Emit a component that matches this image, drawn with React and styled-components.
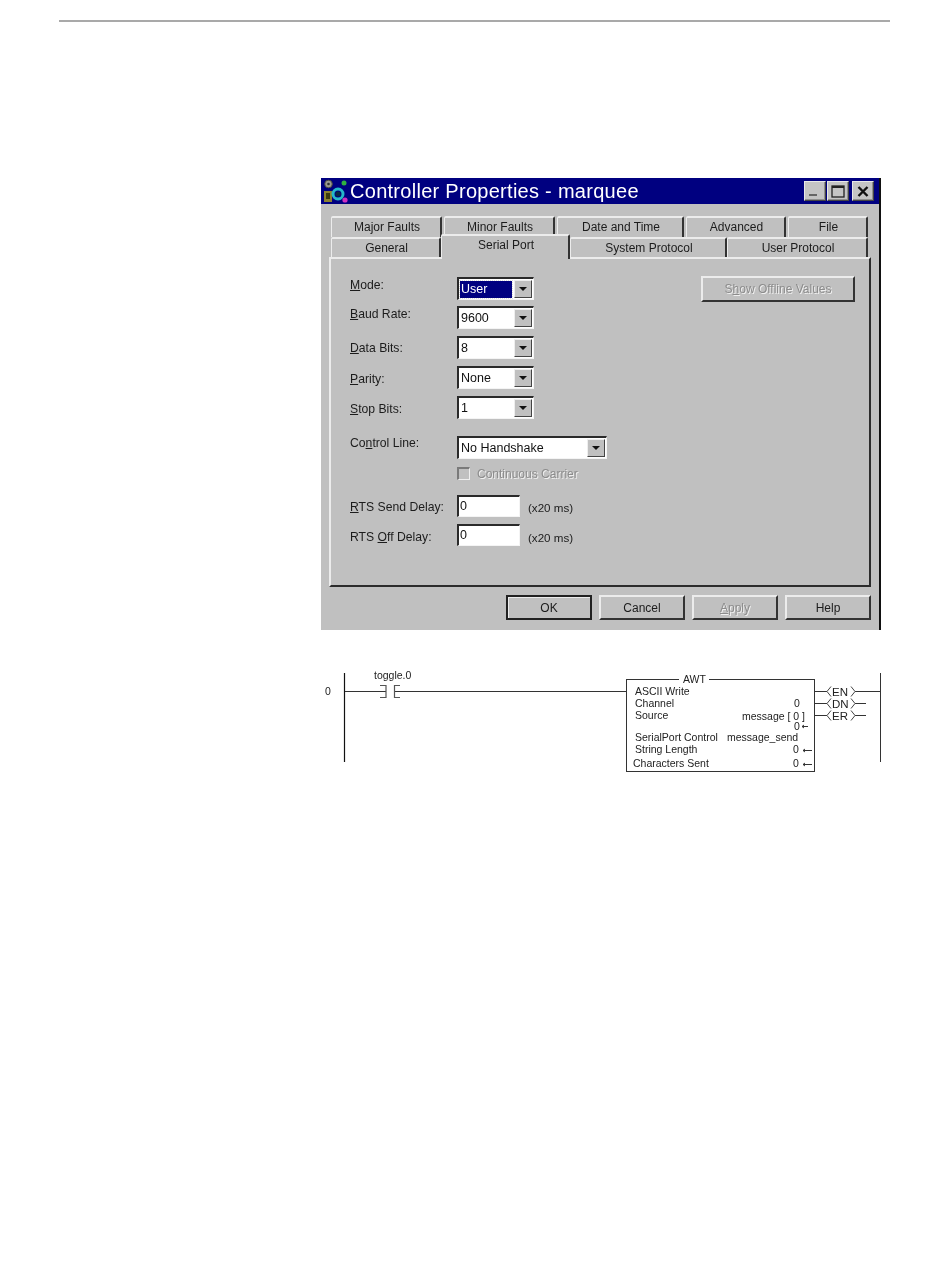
import React from 'react';
import styled, { createGlobalStyle } from 'styled-components';

const GlobalStyle = createGlobalStyle`
  html, body {
    margin: 0;
    padding: 0;
    background: #fff;
  }
  body {
    font-family: "Liberation Sans", Arial, sans-serif;
    color: #111;
  }
`;

const Page = styled.div`
  width: 950px;
  height: 1267px;
  padding-top: 20px;
  box-sizing: border-box;
  overflow: hidden;
`;

const TopRule = styled.hr`
  width: 831px;
  height: 2px;
  margin: 0 0 0 59px;
  border: 0;
  background: #a9a9a9;
`;

const Dialog = styled.section`
  width: 560px;
  height: 452px;
  margin: 156px 0 0 321px;
  box-sizing: border-box;
  display: flex;
  flex-direction: column;
  background: #c0c0c0;
  border-right: 2px solid #111;
  filter: blur(0.4px);
`;

const TitleBar = styled.header`
  height: 26px;
  flex: none;
  display: flex;
  align-items: center;
  background: #000080;
  padding: 0 5px 0 2px;
`;

const TitleText = styled.h1`
  margin: 0 0 0 2px;
  flex: 1;
  color: #fff;
  font-size: 20px;
  font-weight: 400;
  letter-spacing: 0.28px;
  white-space: nowrap;
`;

const WinButton = styled.button`
  width: 22px;
  height: 20px;
  margin-left: ${({ $gap }) => $gap || 1}px;
  padding: 0;
  display: flex;
  align-items: center;
  justify-content: center;
  background: #c4c4c4;
  border: 1px solid;
  border-color: #e8e8e8 #444 #444 #e8e8e8;
  box-shadow: inset -1px -1px 0 #909090;
`;

const Tabs = styled.div`
  flex: none;
  padding: 12px 0 0 10px;
  height: 41px;
`;

const TabRow = styled.div`
  display: flex;
  height: 21px;
`;

const Tab = styled.div`
  width: ${({ $w }) => $w}px;
  height: ${({ $active }) => ($active ? 25 : 21)}px;
  margin-top: ${({ $active }) => ($active ? -3 : 0)}px;
  margin-right: ${({ $gap }) => $gap || 0}px;
  padding: 2px 0 0 2px;
  box-sizing: border-box;
  position: relative;
  z-index: ${({ $active }) => ($active ? 2 : 0)};
  text-align: center;
  font-size: 12px;
  line-height: 15px;
  color: #1c1c1c;
  background: #c0c0c0;
  border-top: 2px solid #ececec;
  border-left: 1px solid #ececec;
  border-right: 2px solid #333;
  border-radius: 2px 2px 0 0;
`;

const Panel = styled.div`
  width: 542px;
  height: 330px;
  margin: 0 0 0 8px;
  box-sizing: border-box;
  flex: none;
  position: relative;
  padding: 18px 0 0 19px;
  background: #c0c0c0;
  border-style: solid;
  border-width: 2px;
  border-color: #ececec #2c2c2c #2c2c2c #ececec;
`;

const Row = styled.div`
  display: flex;
  align-items: center;
  height: ${({ $h }) => $h || 23}px;
  margin-top: ${({ $mt }) => $mt || 0}px;
`;

const Label = styled.label`
  width: 107px;
  flex: none;
  font-size: 12.2px;
  color: #1c1c1c;
  margin-top: ${({ $dy }) => $dy || 0}px;
`;

const Under = styled.span`
  text-decoration: underline;
`;

const Select = styled.div`
  width: ${({ $w }) => $w || 77}px;
  height: 23px;
  box-sizing: border-box;
  display: flex;
  align-items: center;
  justify-content: space-between;
  padding: 0 1px;
  background: #fff;
  border-style: solid;
  border-width: 2px 1px 1px 2px;
  border-color: #2a2a2a #f4f4f4 #f4f4f4 #2a2a2a;
`;

const SelectValue = styled.span`
  font-size: 12.5px;
  padding: 0 ${({ $focus }) => ($focus ? 6 : 1)}px 0 1px;
  margin-right: auto;
  flex: ${({ $focus }) => ($focus ? 1 : 'none')};
  line-height: 17px;
  color: ${({ $focus }) => ($focus ? '#fff' : '#111')};
  background: ${({ $focus }) => ($focus ? '#000080' : 'transparent')};
  outline: ${({ $focus }) => ($focus ? '1px dotted #ddd' : 'none')};
`;

const Arrow = styled.span`
  width: 18px;
  height: 18px;
  flex: none;
  display: flex;
  align-items: center;
  justify-content: center;
  margin-left: ${({ $focus }) => ($focus ? 2 : 0)}px;
  background: #c0c0c0;
  box-sizing: border-box;
  border-style: solid;
  border-width: 1px;
  border-color: #eee #444 #444 #eee;
  &::after {
    content: '';
    border-style: solid;
    border-width: 4px 4px 0 4px;
    border-color: #111 transparent transparent transparent;
  }
`;

const CheckRow = styled.div`
  display: flex;
  align-items: center;
  height: 15px;
  margin: 7px 0 0 107px;
`;

const CheckBox = styled.span`
  width: 13px;
  height: 13px;
  box-sizing: border-box;
  background: #c0c0c0;
  border-style: solid;
  border-width: 2px 1px 1px 2px;
  border-color: #7a7a7a #eee #eee #7a7a7a;
`;

const DisabledText = styled.span`
  margin-left: ${({ $ml }) => $ml || 0}px;
  font-size: 12px;
  color: #8c8c8c;
  text-shadow: 1px 1px 0 #f0f0f0;
`;

const TextBox = styled.div`
  width: 63px;
  height: 22px;
  box-sizing: border-box;
  padding: 1px 0 0 1px;
  font-size: 12.5px;
  line-height: 16px;
  background: #fff;
  border-style: solid;
  border-width: 2px 1px 1px 2px;
  border-color: #2a2a2a #f4f4f4 #f4f4f4 #2a2a2a;
`;

const Unit = styled.span`
  margin: ${({ $dy }) => $dy || 0}px 0 0 8px;
  font-size: 11.6px;
  color: #1c1c1c;
`;

const OfflineButton = styled.div`
  position: absolute;
  top: 17px;
  right: 14px;
  width: 154px;
  height: 26px;
  box-sizing: border-box;
  display: flex;
  align-items: center;
  justify-content: center;
  background: #c0c0c0;
  border-style: solid;
  border-width: 2px;
  border-color: #ececec #333 #333 #ececec;
`;

const Footer = styled.footer`
  flex: 1;
  display: flex;
  justify-content: flex-end;
  gap: 7px;
  padding: 8px 8px 0 0;
`;

const DialogButton = styled.div`
  width: 86px;
  height: 25px;
  box-sizing: border-box;
  display: flex;
  align-items: center;
  justify-content: center;
  font-size: 12px;
  color: #1c1c1c;
  background: #c0c0c0;
  border-style: solid;
  border-width: 2px;
  border-color: ${({ $primary }) =>
    $primary ? '#222' : '#ececec #333 #333 #ececec'};
  box-shadow: ${({ $primary }) =>
    $primary ? 'inset 1px 1px 0 #ececec' : 'none'};
`;

const Ladder = styled.svg`
  display: block;
  margin: 32px 0 0 320px;
  font-family: "Liberation Sans", Arial, sans-serif;
  font-size: 10.5px;
  fill: #222;
  filter: blur(0.3px);
`;

const AppIcon = () => (
  <svg width="25" height="24" viewBox="0 0 25 24" style={{ flex: 'none' }}>
    <circle cx="5.5" cy="5" r="3.8" fill="#9a9a90" stroke="#4a4a40" />
    <circle cx="5.5" cy="5" r="1.3" fill="#333" />
    <rect x="1" y="12" width="8" height="11" fill="#8a8030" />
    <rect x="3" y="14" width="4" height="6" fill="#3a3810" />
    <circle cx="15" cy="15" r="5" fill="none" stroke="#25b8c8" strokeWidth="3" />
    <circle cx="15" cy="15" r="2.5" fill="#0a2a40" />
    <circle cx="21" cy="4" r="2.5" fill="#30b040" />
    <circle cx="22" cy="21" r="2.6" fill="#d030c0" />
  </svg>
);

const Coil = ({ y, name }) => (
  <>
    <path
      d={`M814 ${y}H827M855 ${y}H${name === 'EN' ? 880 : 866}`}
      stroke="#333"
      fill="none"
    />
    <path
      d={`M831 ${y - 5}L827 ${y}L831 ${y + 5}M851 ${y - 5}L855 ${y}L851 ${y + 5}`}
      stroke="#444"
      fill="none"
    />
    <text x="832" y={y + 4} fontSize="11.5">{name}</text>
  </>
);

const rows = [
  { label: 'ode:', key: 'M', value: 'User', focus: true, mt: 0, dy: -7 },
  { label: 'aud Rate:', key: 'B', value: '9600', mt: 6, dy: -7 },
  { label: 'ata Bits:', key: 'D', value: '8', mt: 7, dy: 0 },
  { label: 'arity:', key: 'P', value: 'None', mt: 7, dy: 2 },
  { label: 'top Bits:', key: 'S', value: '1', mt: 7, dy: 2 },
];

const backTabs = [
  ['Major Faults', 111, 2],
  ['Minor Faults', 111, 2],
  ['Date and Time', 127, 2],
  ['Advanced', 100, 2],
  ['File', 80, 0],
];

const frontTabs = [
  ['General', 110],
  ['Serial Port', 129, true],
  ['System Protocol', 157],
  ['User Protocol', 141],
];

const App = () => {
  return (
    <>
      <GlobalStyle />
      <Page>
        <TopRule />
        <Dialog>
          <TitleBar>
            <AppIcon />
            <TitleText>Controller Properties - marquee</TitleText>
            <WinButton>
              <svg width="14" height="12"><rect x="1" y="9" width="8" height="2" fill="#666" /></svg>
            </WinButton>
            <WinButton>
              <svg width="14" height="13"><rect x="1" y="1" width="12" height="11" fill="none" stroke="#222" strokeWidth="1.3" /><rect x="1" y="1" width="12" height="2" fill="#222" /></svg>
            </WinButton>
            <WinButton $gap={3}>
              <svg width="12" height="11"><path d="M1.5 1 L10.5 10 M10.5 1 L1.5 10" stroke="#111" strokeWidth="2.4" /></svg>
            </WinButton>
          </TitleBar>
          <Tabs>
            <TabRow>
              {backTabs.map(([name, w, gap]) => (
                <Tab key={name} $w={w} $gap={gap}>{name}</Tab>
              ))}
            </TabRow>
            <TabRow>
              {frontTabs.map(([name, w, active]) => (
                <Tab key={name} $w={w} $active={active}>{name}</Tab>
              ))}
            </TabRow>
          </Tabs>
          <Panel>
            <OfflineButton>
              <DisabledText>S<Under>h</Under>ow Offline Values</DisabledText>
            </OfflineButton>
            {rows.map((r) => (
              <Row key={r.key} $mt={r.mt}>
                <Label $dy={r.dy}><Under>{r.key}</Under>{r.label}</Label>
                <Select>
                  <SelectValue $focus={r.focus}>{r.value}</SelectValue>
                  <Arrow $focus={r.focus} />
                </Select>
              </Row>
            ))}
            <Row $mt={17}>
              <Label $dy={-10}>Co<Under>n</Under>trol Line:</Label>
              <Select $w={150}>
                <SelectValue>No Handshake</SelectValue>
                <Arrow />
              </Select>
            </Row>
            <CheckRow>
              <CheckBox />
              <DisabledText $ml={7}>Continuous Carrier</DisabledText>
            </CheckRow>
            <Row $h={22} $mt={14}>
              <Label $dy={2}><Under>R</Under>TS Send Delay:</Label>
              <TextBox>0</TextBox>
              <Unit $dy={2}>(x20 ms)</Unit>
            </Row>
            <Row $h={22} $mt={7}>
              <Label $dy={4}>RTS <Under>O</Under>ff Delay:</Label>
              <TextBox>0</TextBox>
              <Unit $dy={4}>(x20 ms)</Unit>
            </Row>
          </Panel>
          <Footer>
            <DialogButton $primary>OK</DialogButton>
            <DialogButton>Cancel</DialogButton>
            <DialogButton><DisabledText><Under>A</Under>pply</DisabledText></DialogButton>
            <DialogButton>Help</DialogButton>
          </Footer>
        </Dialog>

        {/* ladder rung, viewBox keeps the page coordinates */}
        <Ladder width="570" height="115" viewBox="320 662 570 115">
          <g stroke="#333" fill="none">
            <path d="M344.5 673V762" stroke="#111" strokeWidth="1.2" />
            <path d="M880.5 673V762" />
            <path d="M345 691.5H386M394 691.5H626" />
            <path d="M380 685.5H386V697.5H380M400 685.5H394.5V697.5H400" stroke="#555" strokeWidth="1.2" />
            <rect x="626.5" y="679.5" width="188" height="92" />
          </g>
          <rect x="679" y="676" width="30" height="7" fill="#fff" />
          <Coil y={691.5} name="EN" />
          <Coil y={703.5} name="DN" />
          <Coil y={715.5} name="ER" />
          <text x="325" y="695">0</text>
          <text x="374" y="679">toggle.0</text>
          <text x="683" y="683">AWT</text>
          <text x="635" y="695">ASCII Write</text>
          <text x="635" y="707">Channel</text>
          <text x="635" y="719">Source</text>
          <text x="794" y="707">0</text>
          <text x="742" y="720">message [ 0 ]</text>
          <text x="794" y="730">0</text>
          <text x="635" y="741">SerialPort Control</text>
          <text x="727" y="741">message_send</text>
          <text x="635" y="753">String Length</text>
          <text x="793" y="753">0</text>
          <text x="633" y="767">Characters Sent</text>
          <text x="793" y="767">0</text>
          <g stroke="#333" fill="none">
            <path d="M802 726.5H808M802 726.5L804 725M802 726.5L804 728" />
            <path d="M803 750.5H812M803 750.5L805 749M803 750.5L805 752" />
            <path d="M803 764.5H812M803 764.5L805 763M803 764.5L805 766" />
          </g>
        </Ladder>
      </Page>
    </>
  );
};

export default App;
